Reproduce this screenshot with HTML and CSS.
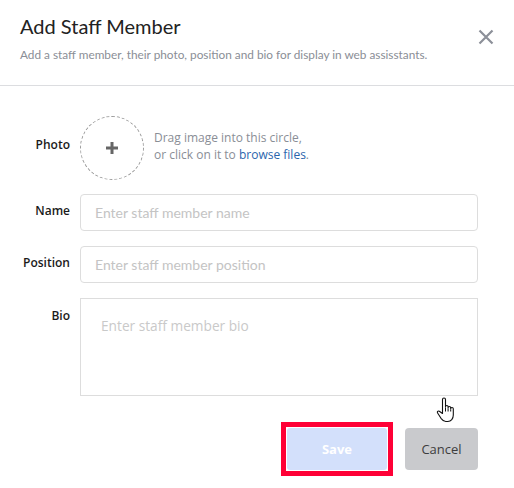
FILE: index.html
```html
<!DOCTYPE html>
<html lang="en">
<head>
<meta charset="utf-8">
<title>Add Staff Member</title>
<link rel="stylesheet" href="styles.css">
</head>
<body>
<div class="dialog">
  <header class="head">
    <div class="head-text">
      <h1 class="title">Add Staff Member</h1>
      <p class="subtitle">Add a staff member, their photo, position and bio for display in web assisstants.</p>
    </div>
    <button class="close" aria-label="Close">
      <svg width="16" height="16" viewBox="0 0 16 16"><path d="M1.5 1.5 L14.5 14.5 M14.5 1.5 L1.5 14.5" stroke="#8c9099" stroke-width="2.2" fill="none"/></svg>
    </button>
  </header>
  <form class="form">
    <label class="label label-photo">Photo</label>
    <div class="photo-row">
      <div class="photo-circle">
        <svg width="12" height="12" viewBox="0 0 12 12"><path d="M6 0 V12 M0 6 H12" stroke="#666" stroke-width="3"/></svg>
      </div>
      <p class="photo-hint">Drag image into this circle,<br>or click on it to <a class="link" href="#">browse files</a>.</p>
    </div>

    <label class="label">Name</label>
    <input class="field" type="text" placeholder="Enter staff member name">

    <label class="label">Position</label>
    <input class="field" type="text" placeholder="Enter staff member position">

    <label class="label label-bio">Bio</label>
    <textarea class="bio" placeholder="Enter staff member bio"></textarea>

    <div class="actions">
      <span class="save-frame"><button type="button" class="btn btn-save">Save</button></span>
      <button type="button" class="btn btn-cancel">Cancel</button>
      <svg class="cursor" width="21" height="26" viewBox="0 0 21 26"><path d="M6.5 13 V2.5 a1.5 1.5 0 0 1 3 0 V10 V9.8 a1.3 1.3 0 0 1 2.6 0 V11 V10.8 a1.3 1.3 0 0 1 2.6 0 V12 V11.8 a1.3 1.3 0 0 1 2.6 0 V18 c0 3.5-2.2 6.5-5.5 6.5 h-2 c-2.2 0-3.3-1.2-4.8-3.2 L1.6 16 c-0.8-1.1 0.4-2.5 1.7-1.7 L6.5 16.5 Z" fill="#fff" stroke="#111" stroke-width="1.1" stroke-linejoin="round"/><path d="M9.5 10.5 V14.5 M12.1 11.5 V14.5 M14.7 12.5 V14.5" stroke="#111" stroke-width="1"/></svg>
    </div>
  </form>
</div>
</body>
</html>
```

FILE: styles.css
```css
* { box-sizing: border-box; }
html, body { margin: 0; padding: 0; background: #fff; }
body { width: 514px; height: 488px; overflow: hidden; font-family: "Open Sans", "Noto Sans", sans-serif; }

.dialog { width: 514px; }

.head {
  display: flex;
  justify-content: space-between;
  align-items: flex-start;
  padding: 14px 20px 0 20px;
  height: 86px;
  border-bottom: 1px solid #dcdde0;
}
.title {
  margin: 0;
  font-family: Lato, sans-serif;
  font-weight: 400;
  font-size: 20px;
  line-height: 24px;
  color: #222;
}
.subtitle {
  margin: 10px 0 0;
  font-family: Lato, sans-serif;
  font-size: 11.8px;
  line-height: 14.4px;
  color: #8a8e96;
}
.close {
  margin: 15px 0 0;
  padding: 0;
  border: 0;
  background: none;
  width: 16px;
  height: 16px;
  display: block;
}
.close svg { display: block; }

.form {
  display: grid;
  grid-template-columns: 70px 398px;
  column-gap: 10px;
  row-gap: 15px;
  padding: 30px 0 0 0;
  margin: 0;
}
.label {
  text-align: right;
  font-size: 12px;
  font-weight: 600;
  color: #1a1a1a;
  line-height: 18px;
  padding-top: 8px;
}
.label-photo { padding-top: 20px; }
.label-bio { padding-top: 9px; }

.photo-row {
  display: flex;
  align-items: center;
  gap: 10px;
  margin-bottom: -1px;
}
.photo-circle {
  width: 64px;
  height: 64px;
  border-radius: 50%;
  border: 1px dashed #9a9a9a;
  display: flex;
  align-items: center;
  justify-content: center;
  flex: none;
}
.photo-circle svg { display: block; }
.photo-hint {
  margin: 0 0 4px;
  font-size: 12px;
  line-height: 17px;
  color: #8a8e96;
}
.link { color: #2b65ad; text-decoration: none; }

.field {
  display: block;
  width: 398px;
  height: 37px;
  border: 1px solid #dddddd;
  border-radius: 4px;
  padding: 0 14px;
  font-family: Lato, sans-serif;
  font-size: 14px;
  color: #333;
  background: #fff;
  outline: none;
}
.field::placeholder { color: #c4c4c4; }

.bio {
  display: block;
  width: 398px;
  height: 98px;
  border: 1px solid #dddddd;
  border-radius: 0;
  padding: 17px 20px;
  font-family: "Open Sans", sans-serif;
  font-size: 13.7px;
  line-height: 19px;
  resize: none;
  outline: none;
  margin: 0;
}
.bio::placeholder { color: #c9c9c9; }

.actions {
  grid-column: 1 / 3;
  display: flex;
  justify-content: flex-end;
  align-items: center;
  gap: 12px;
  margin-top: 11px;
  position: relative;
}
.save-frame {
  display: block;
  border: 5px solid #ff0036;
  padding: 1px;
  background: #fff;
}
.btn {
  display: block;
  height: 42px;
  border: 0;
  border-radius: 4px;
  font-family: "Open Sans", sans-serif;
  font-size: 13px;
  padding: 0;
}
.btn-save {
  width: 100px;
  background: #d3e0fb;
  color: #fff;
  font-weight: 700;
  border-radius: 3px;
}
.btn-cancel {
  width: 73px;
  background: #c9cacd;
  color: #3d3d3d;
}
.cursor {
  position: absolute;
  left: 436px;
  top: -25px;
}
```
